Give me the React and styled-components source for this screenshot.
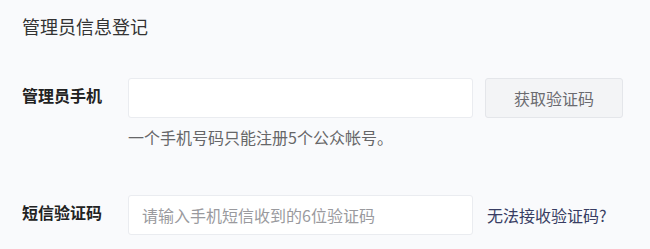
import React from "react";
import styled, { createGlobalStyle } from "styled-components";

const GlobalStyle = createGlobalStyle`
  html, body {
    margin: 0;
    padding: 0;
    background: #f9fafc;
  }
  body {
    font-family: "Noto Sans CJK SC", "Noto Sans", sans-serif;
  }
`;

const Page = styled.div`
  width: 650px;
  height: 249px;
  box-sizing: border-box;
  padding: 14px 22px 0;
  background: #f9fafc;
  overflow: hidden;
`;

const Title = styled.h2`
  margin: 0;
  font-size: 18px;
  line-height: 24px;
  font-weight: 400;
  color: #333333;
`;

const Row = styled.div`
  display: flex;
  align-items: flex-start;
  margin-top: ${(p) => p.$top}px;
`;

const Label = styled.label`
  width: 106px;
  flex-shrink: 0;
  font-size: 16px;
  line-height: 34px;
  font-weight: 700;
  color: #222222;
`;

const Field = styled.div`
  display: flex;
  flex-direction: column;
`;

const Input = styled.input`
  width: 345px;
  height: 40px;
  box-sizing: border-box;
  padding: 0 13px;
  border: 1px solid #eaecf0;
  border-radius: 3px;
  background: #ffffff;
  font-family: inherit;
  font-size: 16px;
  color: #333;
  outline: none;
  &::placeholder {
    color: #9a9a9e;
  }
`;

const Hint = styled.div`
  margin-top: 8px;
  font-size: 16px;
  line-height: 22px;
  color: #666668;
`;

const CodeButton = styled.button`
  margin-left: 12px;
  width: 138px;
  height: 40px;
  border: 1px solid #e4e6ea;
  border-radius: 3px;
  background: #f3f4f6;
  font-family: inherit;
  font-size: 16px;
  color: #6b6b70;
  cursor: pointer;
`;

const HelpLink = styled.a`
  margin-left: 14px;
  font-size: 16px;
  line-height: 40px;
  color: #383d63;
  text-decoration: none;
  cursor: pointer;
`;

export default function App() {
  return (
    <>
      <GlobalStyle />
      <Page>
        <Title>管理员信息登记</Title>
        <Row $top={40}>
          <Label>管理员手机</Label>
          <Field>
            <Input type="text" />
            <Hint>一个手机号码只能注册5个公众帐号。</Hint>
          </Field>
          <CodeButton type="button">获取验证码</CodeButton>
        </Row>
        <Row $top={47}>
          <Label>短信验证码</Label>
          <Input type="text" placeholder="请输入手机短信收到的6位验证码" />
          <HelpLink>无法接收验证码?</HelpLink>
        </Row>
      </Page>
    </>
  );
}
